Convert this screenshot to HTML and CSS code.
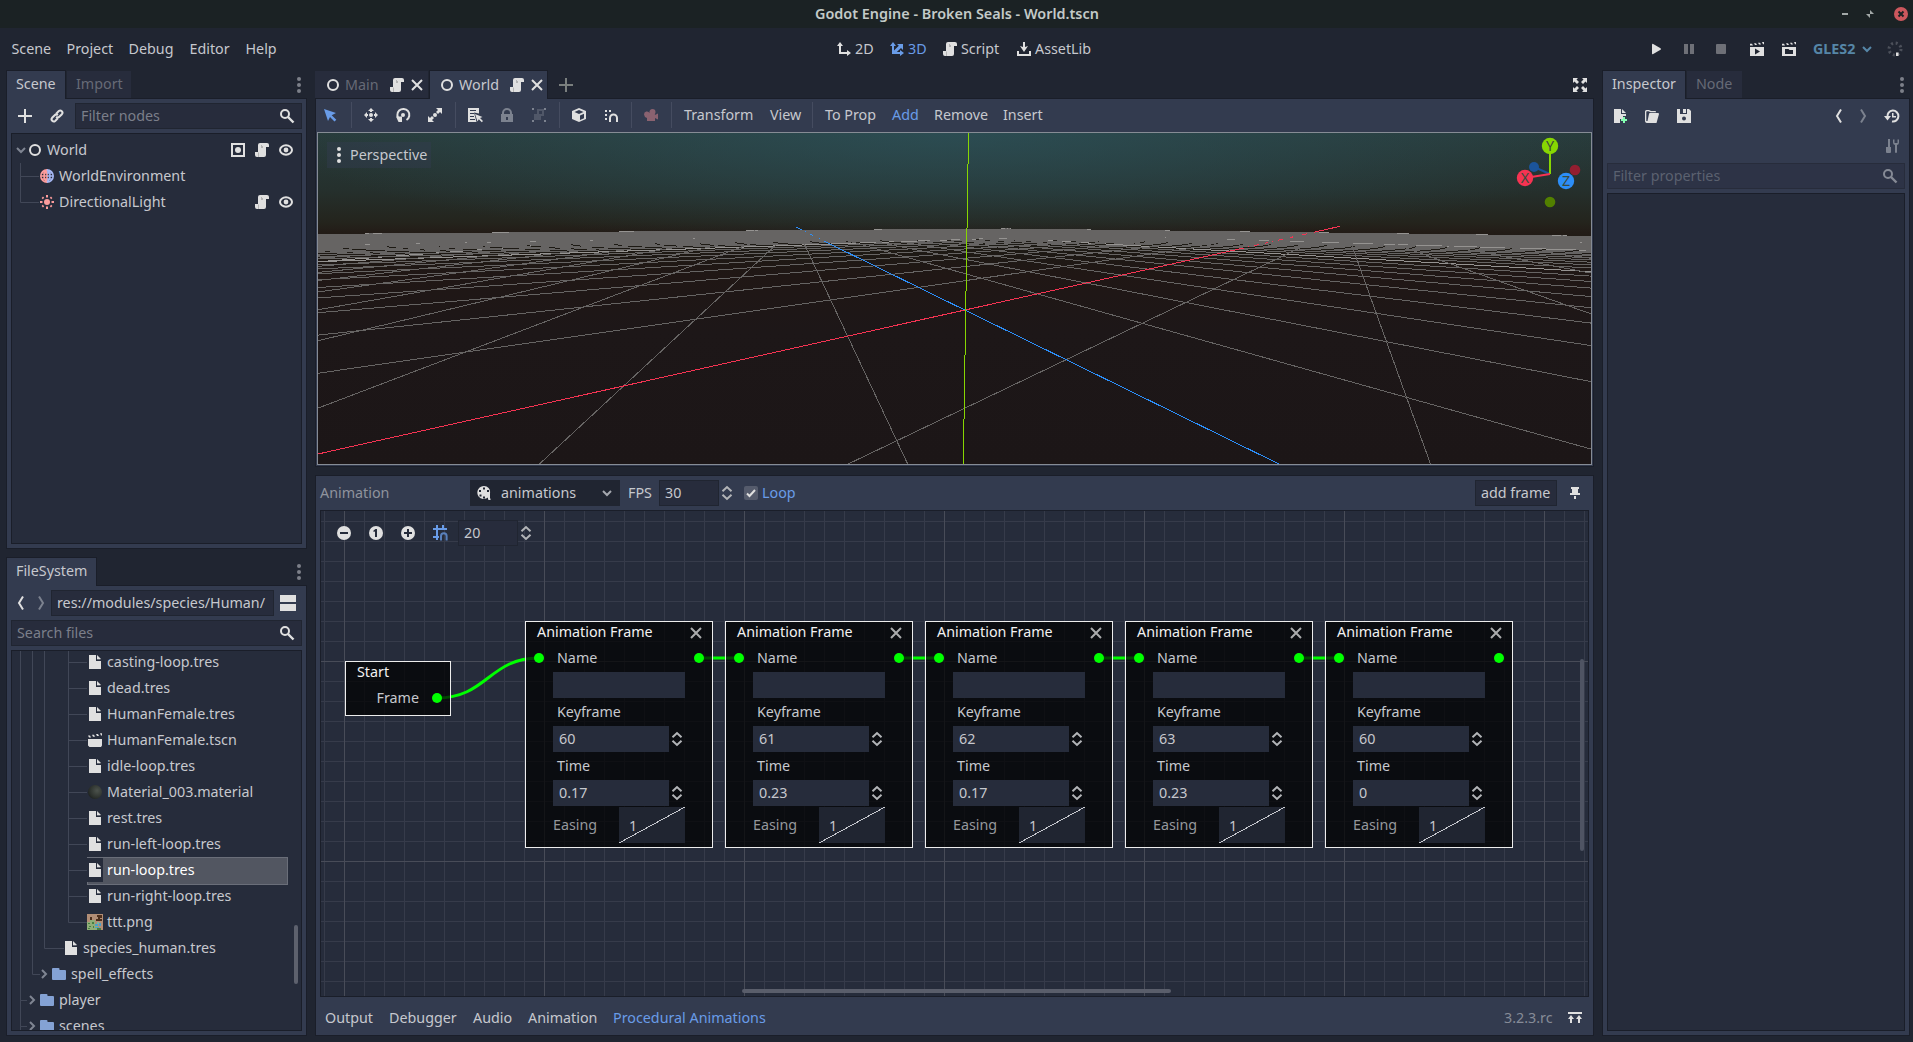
FILE: index.html
```html
<!DOCTYPE html>
<html lang="en">
<head>
<meta charset="utf-8">
<title>Godot Engine - Broken Seals - World.tscn</title>
<link rel="stylesheet" href="styles.css">
</head>
<body>
<svg class="sprite" width="0" height="0">
  <symbol id="script" viewBox="0 0 16 16"><path d="M6 1a2 2 0 0 0-2 2v7H1v3a2 2 0 0 0 2 2h7a2 2 0 0 0 2-2V5h3V3a2 2 0 0 0-2-2z"/><path d="M9 5V4H8V3H7v3h2v-1zM4 10.500h1V15H4z" fill="#b4b4b4"/></symbol>
  <symbol id="ring" viewBox="0 0 16 16"><circle cx="8" cy="8" r="5" fill="none" stroke="currentColor" stroke-width="2"/></symbol>
  <symbol id="close" viewBox="0 0 16 16"><path d="M3 3l10 10M13 3L3 13" fill="none" stroke="currentColor" stroke-width="2"/></symbol>
  <symbol id="plus" viewBox="0 0 16 16"><path d="M7 1h2v6h6v2H9v6H7V9H1V7h6z"/></symbol>
  <symbol id="dots" viewBox="0 0 16 16"><circle cx="8" cy="2" r="2"/><circle cx="8" cy="8" r="2"/><circle cx="8" cy="14" r="2"/></symbol>
  <symbol id="search" viewBox="0 0 16 16"><circle cx="6" cy="6" r="4" fill="none" stroke="currentColor" stroke-width="2"/><path d="M9 9l5.500 5.500" stroke="currentColor" stroke-width="2.400"/></symbol>
  <symbol id="link" viewBox="0 0 16 16"><g fill="none" stroke="currentColor" stroke-width="2"><path d="M7.200 5.700l2.600-2.600a2.200 2.200 0 0 1 3.100 3.100l-2.600 2.600a2.200 2.200 0 0 1-3.100 0"/><path d="M8.800 10.300l-2.600 2.600a2.200 2.200 0 0 1-3.100-3.100l2.600-2.600a2.200 2.200 0 0 1 3.100 0"/></g></symbol>
  <symbol id="down" viewBox="0 0 16 16"><path d="M4 6l4 4 4-4" fill="none" stroke="currentColor" stroke-width="2"/></symbol>
  <symbol id="right" viewBox="0 0 16 16"><path d="M6 4l4 4-4 4" fill="none" stroke="currentColor" stroke-width="2"/></symbol>
  <symbol id="back" viewBox="0 0 16 16"><path d="M10 1.500L6 8l4 6.500" fill="none" stroke="currentColor" stroke-width="2"/></symbol>
  <symbol id="fwd" viewBox="0 0 16 16"><path d="M6 1.500L10 8l-4 6.500" fill="none" stroke="currentColor" stroke-width="2"/></symbol>
  <symbol id="eye" viewBox="0 0 16 16"><ellipse cx="8" cy="8" rx="6" ry="4.700" fill="none" stroke="currentColor" stroke-width="2"/><circle cx="8" cy="8" r="2.400"/></symbol>
  <symbol id="open" viewBox="0 0 16 16"><path d="M1 1h14v14H1zM3 3v10h10V3z" fill-rule="evenodd"/><circle cx="8" cy="8" r="3"/></symbol>
  <symbol id="globe" viewBox="0 0 16 16"><g fill="none" stroke-width="1.600"><g stroke="#fc9c9c"><path d="M8 1.800a6.200 6.200 0 0 0 0 12.400M8 2c-4 3-4 9 0 12M8 1v14M2 8h6M2.500 5h5.500M2.500 11h5.500"/></g><g stroke="#a5b7f3"><path d="M8 1.800a6.200 6.200 0 0 1 0 12.400M8 2c4 3 4 9 0 12M8 8h6M8 5h5.500M8 11h5.500"/></g></g></symbol>
  <symbol id="sun" viewBox="0 0 16 16"><circle cx="8" cy="8" r="3"/><path d="M7 1h2v2.500H7zM7 12.500h2V15H7zM1 7h2.500v2H1zM12.500 7H15v2h-2.500zM2.600 4L4 2.600 5.200 3.800 3.800 5.200zM12 2.600L13.400 4l-1.200 1.200-1.400-1.400zM4 13.400L2.600 12l1.200-1.200 1.400 1.400zM13.400 12L12 13.400l-1.200-1.200 1.400-1.400z"/></symbol>
  <symbol id="file" viewBox="0 0 16 16"><path d="M2 1v14h12V7H9V1zM10 1v4h4z"/><path d="M10 2v4h4z" opacity=".35"/></symbol>
  <symbol id="clap" viewBox="0 0 16 16"><path d="M1 7h14v6.500L14 15H2.500L1 13.500zM1 3.500h2L4 5.500H2zM5 2.800h2L8 4.800H6zM9 2h2l1 2h-2zM13 1.200h2V3.500h-1z"/></symbol>
  <symbol id="clapplay" viewBox="0 0 16 16"><path d="M1 6h14v9H1zM6 7.500v6l5-3z" fill-rule="evenodd"/><path d="M1 2.800h2l1 1.700H1zM5 2.300h2l1 1.700H6zM9 1.800h2l1 1.700h-2zM13 1h2v2.300h-1z"/></symbol>
  <symbol id="clapopen" viewBox="0 0 16 16"><path d="M1 6h14v9H1zM4 8v5h8V9H8.500L7.500 8z" fill-rule="evenodd"/><path d="M1 2.800h2l1 1.700H1zM5 2.300h2l1 1.700H6zM9 1.800h2l1 1.700h-2zM13 1h2v2.300h-1z"/></symbol>
  <symbol id="folder" viewBox="0 0 16 16"><path d="M2 2h5.500a1 1 0 0 1 1 1v1H14a1 1 0 0 1 1 1v8a1 1 0 0 1-1 1H2a1 1 0 0 1-1-1V3a1 1 0 0 1 1-1z"/></symbol>
  <symbol id="split" viewBox="0 0 16 16"><path d="M0 0h16v7H0zM0 9h16v7H0z"/></symbol>
  <symbol id="d2" viewBox="0 0 16 16"><path d="M4 1l3 4H5v6h6V9l4 3-4 3v-2H3V5H1z"/></symbol>
  <symbol id="d3" viewBox="0 0 16 16"><path d="M4 1l3 4H5v4.600l4.800-4.800L8 3h6v6l-2-2-4.200 4H11V9l4 3-4 3v-2H3V5H1z"/></symbol>
  <symbol id="asset" viewBox="0 0 16 16"><path d="M7 1h2v5l3-1-4 6-4-6 3 1zM1 10h2v3h10v-3h2v5H1z"/></symbol>
  <symbol id="spin" viewBox="0 0 16 16"><path d="M3.500 6.200L8 2l4.500 4.200M3.500 9.800L8 14l4.500-4.200" fill="none" stroke="currentColor" stroke-width="2"/></symbol>
  <symbol id="cursor" viewBox="0 0 16 16"><path d="M1 2l4 12 2-4 4.500 4.500 1.800-1.800L8.700 8.200 13 6z"/></symbol>
  <symbol id="move" viewBox="0 0 16 16"><circle cx="8" cy="8" r="2"/><path d="M8 1l3 3H5zM8 15l3-3H5zM1 8l3-3v6zM15 8l-3-3v6zM7 4h2v1H7zM7 11h2v1H7zM4 7h1v2H4zM11 7h1v2h-1z"/></symbol>
  <symbol id="rotate" viewBox="0 0 16 16"><circle cx="8" cy="8" r="2"/><path d="M4.500 12.500A6 6 0 1 1 11.500 13" fill="none" stroke="currentColor" stroke-width="2"/><path d="M1 9.500h6V15H3.500z"/></symbol>
  <symbol id="scale" viewBox="0 0 16 16"><circle cx="8" cy="8" r="2"/><path d="M9 1h6v6l-2-2-2 2-2-2 2-2zM7 15H1V9l2 2 2-2 2 2-2 2z"/></symbol>
  <symbol id="list" viewBox="0 0 16 16"><path d="M1 1h11v5.500L7 5.500l2.500 9.500H1zM3 3v1h6V3zM3 6v1h4V6zM3 9v1h4V9zM3 12v1h5v-1z" fill-rule="evenodd"/><path d="M8 7l7.500 3-2.500 1 3 3-1.200 1.200-3-3-1.300 2.300z"/></symbol>
  <symbol id="lock" viewBox="0 0 16 16"><path d="M8 1a5 5 0 0 0-5 5v1H2v8h12V7h-1V6a5 5 0 0 0-5-5zm0 2a3 3 0 0 1 3 3v1H5V6a3 3 0 0 1 3-3zM7 10h2v3H7z" fill-rule="evenodd"/></symbol>
  <symbol id="group" viewBox="0 0 16 16"><path d="M1 1h2v2H1zM13 1h2v2h-2zM1 13h2v2H1zM13 13h2v2h-2z"/><path d="M6 2h7v7H10v4H3V7h3zM8 4v3h3V4z" fill-rule="evenodd" opacity=".4"/></symbol>
  <symbol id="cube" viewBox="0 0 16 16"><path d="M8 1l7 3v8l-7 3-7-3V4zM3.500 5L8 7l4.500-2L8 3zM9 8.500v4.500l4-1.800V6.700z" fill-rule="evenodd"/></symbol>
  <symbol id="snap" viewBox="0 0 16 16"><path d="M2 3h2v2H2zM6 3h2v2H6zM2 7h2v2H2zM2 11h2v2H2z"/><path d="M7 15v-4a3.500 3.500 0 0 1 7 0v4" fill="none" stroke="currentColor" stroke-width="2"/></symbol>
  <symbol id="camera" viewBox="0 0 16 16"><path d="M9.500 2a3 3 0 0 1 3 3 3 3 0 0 1-.6 2v1L15 6.500v6L12 11v3H4v-3a4 4 0 0 1-3-3.500 3 3 0 0 1 5.600-1.500A3 3 0 0 1 9.500 2z"/></symbol>
  <symbol id="expand" viewBox="0 0 16 16"><path d="M1 1h5L4.500 2.500l2.500 2.500-2 2-2.500-2.500L1 6zM15 1h-5l1.500 1.500L9 5l2 2 2.500-2.500L15 6zM1 15h5l-1.500-1.500L7 11 5 9l-2.500 2.500L1 10zM15 15h-5l1.500-1.500L9 11l2-2 2.500 2.500L15 10z"/></symbol>
  <symbol id="play" viewBox="0 0 16 16"><path d="M3 3.500v9a.8.8 0 0 0 1.200.6l7.300-4.300a1 1 0 0 0 0-1.600L4.200 2.900A.8.8 0 0 0 3 3.500z"/></symbol>
  <symbol id="pause" viewBox="0 0 16 16"><path d="M3 3h4v10H3zM9 3h4v10H9z"/></symbol>
  <symbol id="stop" viewBox="0 0 16 16"><rect x="3" y="3" width="10" height="10" rx="1"/></symbol>
  <symbol id="newfile" viewBox="0 0 16 16"><path d="M2 1v14h6v-4h3V8h3V6H9V1zM10 1v4h4z"/><path d="M11 9h2v2h2v2h-2v2h-2v-2H9v-2h2z" fill="#84ffb1"/></symbol>
  <symbol id="load" viewBox="0 0 16 16"><path d="M2.500 2A1.500 1.500 0 0 0 1 3.500v9C1 14 1.500 15 3 15h9.500l2.500-9a1 1 0 0 0-1-1H6a1 1 0 0 0-1 1l-1.500 7H2.300V4c0-.6.200-.8.700-.8h1.500l2 1H12A1 1 0 0 0 11 3H7L5 2z"/></symbol>
  <symbol id="save" viewBox="0 0 16 16"><path d="M1 1h3v5h7V1h2l2 2v12H1zM8 8.500a2 2 0 1 0 0 4 2 2 0 0 0 0-4zM7 1h3v4H7z" fill-rule="evenodd"/></symbol>
  <symbol id="history" viewBox="0 0 16 16"><path d="M3.500 9A5.500 5.500 0 1 1 8 13.500" fill="none" stroke="currentColor" stroke-width="2"/><path d="M0 8h7l-3.500 4.500zM8 5h1.500v3H12v1.500H8z"/></symbol>
  <symbol id="tools" viewBox="0 0 16 16"><path d="M4 1h2v8h1v5a1 1 0 0 1-1 1H3a1 1 0 0 1-1-1V9h2zM9 1.500v3A2.500 2.500 0 0 0 11 7v7a1 1 0 0 0 2 0V7a2.500 2.500 0 0 0 2-2.500v-3h-1.500V5h-3V1.500z"/></symbol>
  <symbol id="anim" viewBox="0 0 16 16"><path d="M8 1a6.500 6.500 0 1 0 4 11.500V14a1 1 0 0 0 1 1h1.500v-1.500H14V8a6 6 0 0 0-6-7zM7 2.500h2v2H7zM3 5h2v2H3zM11 5h2v2h-2zM3.500 9.500h2v2h-2zM7 11.500h2v2H7z" fill-rule="evenodd"/></symbol>
  <symbol id="zminus" viewBox="0 0 16 16"><circle cx="8" cy="8" r="7"/><path d="M4 7h8v2H4z" fill="#252b3a"/></symbol>
  <symbol id="zone" viewBox="0 0 16 16"><circle cx="8" cy="8" r="7"/><path d="M7.500 4H9v8H7V6.500L5.500 7V5.500z" fill="#252b3a"/></symbol>
  <symbol id="zplus" viewBox="0 0 16 16"><circle cx="8" cy="8" r="7"/><path d="M7 4h2v3h3v2H9v3H7V9H4V7h3z" fill="#252b3a"/></symbol>
  <symbol id="gridsnap" viewBox="0 0 16 16"><path d="M4 0h2v3h4V0h2v3h3v2H6v6h1v2H6v2H4v-2H1v-2h3V5H1V3h3z"/><path d="M9 15.500V11a2.800 2.800 0 0 1 5.600 0v4.500" fill="none" stroke="currentColor" stroke-width="2" opacity=".75"/></symbol>
  <symbol id="pin" viewBox="0 0 16 16"><path d="M4 2h8v2h-1v4h2v2H3V8h2V4H4zM7 11h2v3H7z"/></symbol>
  <symbol id="raise" viewBox="0 0 16 16"><path d="M1 2h14v2H1zM4 5l3 4H5v4H3V9H1zM12 5l3 4h-2v4h-2V9H9z"/></symbol>
</svg>

<header class="titlebar">
  <div class="window-title">Godot Engine - Broken Seals - World.tscn</div>
  <svg class="window-buttons" width="90" height="28"><path d="M22 13h6v2h-6z" fill="#a3a9a8"/><path d="M50 10l4 4h-4zM46 14h4v4z" fill="#a3a9a8"/><circle cx="81" cy="14" r="7" fill="#cc575d"/><path d="M78.500 11.500l5 5M83.500 11.500l-5 5" stroke="#1b2224" stroke-width="2"/></svg>
</header>

<nav class="menubar">
  <div class="menus"><span class="w55">Scene</span><span class="w62">Project</span><span class="w61">Debug</span><span class="w56">Editor</span><span>Help</span></div>
  <div class="modes">
    <span class="w53"><svg class="i"><use href="#d2"/></svg>2D</span><span class="w53 accent"><svg class="i"><use href="#d3"/></svg>3D</span><span class="w74"><svg class="i"><use href="#script"/></svg>Script</span><span><svg class="i"><use href="#asset"/></svg>AssetLib</span>
  </div>
  <div class="runbar">
    <svg class="i"><use href="#play"/></svg><svg class="i dim"><use href="#pause"/></svg><svg class="i dim"><use href="#stop"/></svg><svg class="i run-scene"><use href="#clapplay"/></svg><svg class="i"><use href="#clapopen"/></svg>
    <b class="renderer">GLES2</b><svg class="i renderer-arrow"><use href="#down"/></svg>
    <svg class="i spinner" viewBox="0 0 16 16"><circle cx="8" cy="8" r="6" fill="none" stroke="#4c505a" stroke-width="3" stroke-dasharray="2 2.710"/><path d="M9 11.500h2.500V15H9z" fill="#e0e0e0"/></svg>
  </div>
</nav>

<main class="workspace">
  <aside class="left">
    <section class="dock scene-dock">
      <div class="tabs"><span class="tab on scene-tab">Scene</span><span class="tab import-tab">Import</span><svg class="i dots"><use href="#dots"/></svg></div>
      <div class="panel">
        <div class="row filter-row"><svg class="i"><use href="#plus"/></svg><svg class="i"><use href="#link"/></svg><div class="field grow"><span class="hint">Filter nodes</span><svg class="i"><use href="#search"/></svg></div></div>
        <div class="tree scene-tree">
          <svg class="lines" width="60" height="120"><path d="M8.500 29v39.500H27M8.500 42.500H27"/></svg>
          <div class="item lv0"><svg class="i arrow"><use href="#down"/></svg><svg class="i"><use href="#ring"/></svg><span>World</span><div class="badges"><svg class="i"><use href="#open"/></svg><svg class="i"><use href="#script"/></svg><svg class="i"><use href="#eye"/></svg></div></div>
          <div class="item lv1"><svg class="i"><use href="#globe"/></svg><span>WorldEnvironment</span></div>
          <div class="item lv1"><svg class="i red"><use href="#sun"/></svg><span>DirectionalLight</span><div class="badges"><svg class="i"><use href="#script"/></svg><svg class="i"><use href="#eye"/></svg></div></div>
        </div>
      </div>
    </section>
    <section class="dock file-dock">
      <div class="tabs"><span class="tab on file-tab">FileSystem</span><svg class="i dots"><use href="#dots"/></svg></div>
      <div class="panel">
        <div class="row path-row"><svg class="i"><use href="#back"/></svg><svg class="i faint"><use href="#fwd"/></svg><div class="field path">res://modules/species/Human/</div><svg class="i"><use href="#split"/></svg></div>
        <div class="field search-row"><span class="hint">Search files</span><svg class="i"><use href="#search"/></svg></div>
        <div class="tree file-tree">
          <svg class="lines" width="90" height="381"><path d="M8.500 0v381M20.500 0v323.500H28M32.500 0v297.500H52M56.500 0v271.500H75M56.500 11.500H75M56.500 37.500H75M56.500 63.500H75M56.500 89.500H75M56.500 115.500H75M56.500 141.500H75M56.500 167.500H75M56.500 193.500H75M56.500 219.500H75M56.500 245.500H75M8.500 349.500H15M8.500 375.500H15"/></svg>
          <div class="item lv4"><svg class="i"><use href="#file"/></svg><span>casting-loop.tres</span></div>
          <div class="item lv4"><svg class="i"><use href="#file"/></svg><span>dead.tres</span></div>
          <div class="item lv4"><svg class="i"><use href="#file"/></svg><span>HumanFemale.tres</span></div>
          <div class="item lv4"><svg class="i"><use href="#clap"/></svg><span>HumanFemale.tscn</span></div>
          <div class="item lv4"><svg class="i"><use href="#file"/></svg><span>idle-loop.tres</span></div>
          <div class="item lv4"><i class="i ball"></i><span>Material_003.material</span></div>
          <div class="item lv4"><svg class="i"><use href="#file"/></svg><span>rest.tres</span></div>
          <div class="item lv4"><svg class="i"><use href="#file"/></svg><span>run-left-loop.tres</span></div>
          <div class="item lv4 selected"><svg class="i"><use href="#file"/></svg><span>run-loop.tres</span></div>
          <div class="item lv4"><svg class="i"><use href="#file"/></svg><span>run-right-loop.tres</span></div>
          <div class="item lv4"><svg class="i" viewBox="0 0 16 16" shape-rendering="crispEdges"><path fill="#b28e76" d="M0 0h16v16H0z"/><path fill="#8fae78" d="M0 8h3V6h5v4h3v6H0z"/><path fill="#4d2f1c" d="M3 3h2v3H3zM10 1h5v3h-2v3H9V5h2zM12 5h3v2h-3z"/><path fill="#477f43" d="M1 9h2v1H1zM5 8h2v2H5zM2 12h2v1H2zM1 14h2v1H1zM6 12h1v2H6zM10 14h4v2h-4z"/><path fill="#4a9fc9" d="M8 10h3v2H8zM12 9h2v3h-2zM8 13h4v1H8z"/><path fill="#78b8a0" d="M10 8h2v2h-2z"/></svg><span>ttt.png</span></div>
          <div class="item lv2"><svg class="i"><use href="#file"/></svg><span>species_human.tres</span></div>
          <div class="item lv1f"><svg class="i arrow"><use href="#right"/></svg><svg class="i blue"><use href="#folder"/></svg><span>spell_effects</span></div>
          <div class="item lv0f"><svg class="i arrow"><use href="#right"/></svg><svg class="i blue"><use href="#folder"/></svg><span>player</span></div>
          <div class="item lv0f"><svg class="i arrow"><use href="#right"/></svg><svg class="i blue"><use href="#folder"/></svg><span>scenes</span></div>
          <i class="scroll file-scroll"></i>
        </div>
      </div>
    </section>
  </aside>

  <section class="center">
    <div class="tabs main-tabs">
      <span class="tab doc"><svg class="i"><use href="#ring"/></svg><em>Main</em><svg class="i s"><use href="#script"/></svg><svg class="i"><use href="#close"/></svg></span><span class="tab on doc doc2"><svg class="i"><use href="#ring"/></svg><em>World</em><svg class="i s"><use href="#script"/></svg><svg class="i"><use href="#close"/></svg></span><svg class="i add-tab"><use href="#plus"/></svg><svg class="i expand"><use href="#expand"/></svg>
    </div>
    <div class="panel view-panel">
      <div class="toolbar">
        <svg class="i accent"><use href="#cursor"/></svg><hr><svg class="i"><use href="#move"/></svg><svg class="i"><use href="#rotate"/></svg><svg class="i"><use href="#scale"/></svg><hr><svg class="i"><use href="#list"/></svg><svg class="i faint"><use href="#lock"/></svg><svg class="i faint"><use href="#group"/></svg><hr><svg class="i"><use href="#cube"/></svg><svg class="i"><use href="#snap"/></svg><hr><svg class="i cam"><use href="#camera"/></svg><hr>
        <span class="w86 first">Transform</span><span class="w42">View</span><hr><span class="w67 first">To Prop</span><span class="w42 accent">Add</span><span class="w69">Remove</span><span>Insert</span>
      </div>
      <div class="viewport">
        <svg id="scene" width="1273" height="331" viewBox="318 133 1273 331">
          <g id="floor"></g>
          <g class="axes">
            <path d="M318 454L965 310" stroke="#f63352"/><path d="M965 310L1241 248.600" stroke="#f63352"/><path d="M1241 248.600L1317 231.500" stroke="#f63352" stroke-dasharray="3 4 1 5 5 7"/><path d="M1317 231.500L1340 226.300" stroke="#f63352"/>
            <path d="M1279 464L827 242.500" stroke="#2c8ef8"/><path d="M827 242.500L801 229.700" stroke="#2c8ef8" stroke-dasharray="3 5 1 7"/><path d="M802 230L796 227" stroke="#2c8ef8"/>
            <path d="M968.500 133L963.300 464" stroke="#87d602"/>
          </g>
          <g class="gizmo">
            <path d="M1550 174L1534 167" stroke="#1b549a"/><path d="M1550 174V146" stroke="#87d602"/><path d="M1550 174L1525 178" stroke="#f63352"/>
            <circle cx="1534" cy="167" r="5" fill="#1b549a"/><circle cx="1575" cy="170" r="5.300" fill="#931e30"/><circle cx="1550" cy="202" r="5.300" fill="#528000"/>
            <circle cx="1550" cy="146" r="8.200" fill="#87d602"/><circle cx="1525" cy="178" r="8.200" fill="#f63352"/><circle cx="1566" cy="181" r="8.200" fill="#2c8ef8"/>
            <text x="1550" y="151">Y</text><text x="1525" y="183">X</text><text x="1566" y="186">Z</text>
          </g>
        </svg>
        <div class="view-label"><svg class="i"><use href="#dots"/></svg>Perspective</div>
      </div>
    </div>

    <div class="panel bottom-panel">
      <div class="anim-bar">
        <span class="muted anim-label">Animation</span>
        <div class="dropdown"><svg class="i"><use href="#anim"/></svg><span>animations</span><svg class="i"><use href="#down"/></svg></div>
        <span class="fps">FPS</span><div class="field num">30</div><svg class="i"><use href="#spin"/></svg>
        <svg class="check" viewBox="0 0 14 14"><rect width="14" height="14" rx="2" fill="#555b6c"/><path d="M3 7.500l2.500 2.500L11 4" fill="none" stroke="#e0e0e0" stroke-width="2"/></svg><span class="accent">Loop</span>
        <div class="field add-frame">add frame</div><svg class="i pin"><use href="#pin"/></svg>
      </div>
      <div class="graph">
        <div class="graph-tools"><svg class="i"><use href="#zminus"/></svg><svg class="i"><use href="#zone"/></svg><svg class="i"><use href="#zplus"/></svg><svg class="i accent"><use href="#gridsnap"/></svg><div class="field num">20</div><svg class="i"><use href="#spin"/></svg></div>
        <svg class="wires" width="1267" height="485" viewBox="321 511 1267 485"><path d="M437 698C487 698 489 658 539 658M699 658h40M899 658h40M1099 658h40M1299 658h40"/></svg>
        <div class="node start"><span class="title">Start</span><span class="slot">Frame</span><i class="port out"></i></div>
        <div class="node frame f1"><div class="head"><span class="title">Animation Frame</span><svg class="i"><use href="#close"/></svg></div><i class="port in"></i><i class="port out"></i><label class="first-label">Name</label><div class="box"></div><label>Keyframe</label><div class="spinrow"><div class="box">60</div><svg class="i"><use href="#spin"/></svg></div><label>Time</label><div class="spinrow"><div class="box">0.17</div><svg class="i"><use href="#spin"/></svg></div><div class="easing"><span>Easing</span><div class="curve">1<svg viewBox="0 0 66 36"><path d="M0 36L66 0"/></svg></div></div></div>
        <div class="node frame f2"><div class="head"><span class="title">Animation Frame</span><svg class="i"><use href="#close"/></svg></div><i class="port in"></i><i class="port out"></i><label class="first-label">Name</label><div class="box"></div><label>Keyframe</label><div class="spinrow"><div class="box">61</div><svg class="i"><use href="#spin"/></svg></div><label>Time</label><div class="spinrow"><div class="box">0.23</div><svg class="i"><use href="#spin"/></svg></div><div class="easing"><span>Easing</span><div class="curve">1<svg viewBox="0 0 66 36"><path d="M0 36L66 0"/></svg></div></div></div>
        <div class="node frame f3"><div class="head"><span class="title">Animation Frame</span><svg class="i"><use href="#close"/></svg></div><i class="port in"></i><i class="port out"></i><label class="first-label">Name</label><div class="box"></div><label>Keyframe</label><div class="spinrow"><div class="box">62</div><svg class="i"><use href="#spin"/></svg></div><label>Time</label><div class="spinrow"><div class="box">0.17</div><svg class="i"><use href="#spin"/></svg></div><div class="easing"><span>Easing</span><div class="curve">1<svg viewBox="0 0 66 36"><path d="M0 36L66 0"/></svg></div></div></div>
        <div class="node frame f4"><div class="head"><span class="title">Animation Frame</span><svg class="i"><use href="#close"/></svg></div><i class="port in"></i><i class="port out"></i><label class="first-label">Name</label><div class="box"></div><label>Keyframe</label><div class="spinrow"><div class="box">63</div><svg class="i"><use href="#spin"/></svg></div><label>Time</label><div class="spinrow"><div class="box">0.23</div><svg class="i"><use href="#spin"/></svg></div><div class="easing"><span>Easing</span><div class="curve">1<svg viewBox="0 0 66 36"><path d="M0 36L66 0"/></svg></div></div></div>
        <div class="node frame f5"><div class="head"><span class="title">Animation Frame</span><svg class="i"><use href="#close"/></svg></div><i class="port in"></i><i class="port out"></i><label class="first-label">Name</label><div class="box"></div><label>Keyframe</label><div class="spinrow"><div class="box">60</div><svg class="i"><use href="#spin"/></svg></div><label>Time</label><div class="spinrow"><div class="box">0</div><svg class="i"><use href="#spin"/></svg></div><div class="easing"><span>Easing</span><div class="curve">1<svg viewBox="0 0 66 36"><path d="M0 36L66 0"/></svg></div></div></div>
        <i class="scroll vscroll"></i><i class="scroll hscroll"></i>
      </div>
      <div class="bottom-tabs"><span class="w64">Output</span><span class="w84">Debugger</span><span class="w55">Audio</span><span class="w85">Animation</span><span class="accent">Procedural Animations</span><span class="version">3.2.3.rc</span><svg class="i"><use href="#raise"/></svg></div>
    </div>
  </section>

  <aside class="dock inspector">
    <div class="tabs"><span class="tab on insp-tab">Inspector</span><span class="tab node-tab">Node</span><svg class="i dots"><use href="#dots"/></svg></div>
    <div class="panel">
      <div class="insp-tools"><svg class="i"><use href="#newfile"/></svg><svg class="i"><use href="#load"/></svg><svg class="i"><use href="#save"/></svg><svg class="i prev"><use href="#back"/></svg><svg class="i faint"><use href="#fwd"/></svg><svg class="i hist"><use href="#history"/></svg></div>
      <div class="insp-sub"><svg class="i faint"><use href="#tools"/></svg></div>
      <div class="field disabled"><span class="hint">Filter properties</span><svg class="i"><use href="#search"/></svg></div>
      <div class="tree grow"></div>
    </div>
  </aside>
</main>
<script src="floor.js"></script>
</body>
</html>
```
FILE: styles.css
```css
* { box-sizing: border-box; }
html, body { margin: 0; width: 1913px; height: 1042px; overflow: hidden; }
body {
  display: flex; flex-direction: column;
  background: #202531; color: #c6c8ce;
  font: 14.300px/26px "Noto Sans", "Open Sans", sans-serif;
  white-space: nowrap;
}
.sprite { position: absolute; }
.i { width: 16px; height: 16px; flex: none; display: block; fill: currentColor; color: #e0e0e0; }
.dim { color: #6e7077; }
.faint { color: #7c828f; }
.accent, .i.accent, .accent .i { color: #699ce8; }
.red { color: #fc9c9c; }
.blue { color: #84a2d4; }
.grow { flex: 1; }
.w42 { width: 42px; } .w53 { width: 53px; } .w55 { width: 55px; }
.w56 { width: 56px; } .w61 { width: 61px; } .w62 { width: 62px; } .w64 { width: 64px; }
.w67 { width: 67px; } .w69 { width: 69px; } .w74 { width: 74px; } .w84 { width: 84px; }
.w85 { width: 85px; } .w86 { width: 86px; }

.titlebar { height: 28px; flex: none; background: #1b2224; display: grid; grid-template-columns: 1fr 283px 1fr; align-items: center; }
.window-title { grid-column: 2; font-weight: 600; font-size: 14.400px; color: #c3cac8; text-align: center; }
.window-buttons { justify-self: end; margin-right: 3px; }

.menubar { height: 42px; flex: none; display: grid; grid-template-columns: 836px 813px 1fr; align-items: center; }
.menus { display: flex; padding-left: 11.500px; }
.modes { display: flex; }
.modes span { display: flex; align-items: center; gap: 3px; }
.runbar { display: flex; align-items: center; gap: 16px; }
.runbar .run-scene { margin-left: 4px; }
.renderer { color: #5686a7; margin-left: 0; width: 42px; }
.renderer-arrow { color: #5686a7; margin-left: -12px; }
.runbar .spinner { margin-left: -4px; }

.workspace { flex: 1; min-height: 0; display: flex; padding: 0 3px 6px 6px; }
.left { width: 301px; min-height: 0; display: flex; flex-direction: column; gap: 8px; }
.dock { display: flex; flex-direction: column; min-height: 0; }
.scene-dock { height: 479px; flex: none; }
.file-dock { flex: 1; }
.center { width: 1279px; margin-left: 8px; display: flex; flex-direction: column; min-height: 0; }
.inspector { width: 308px; margin-left: 8px; }
.tabs { display: flex; align-items: center; height: 29px; margin-bottom: -1px; position: relative; flex: none; }
.tab { height: 29px; padding: 1px 9px 0; margin-right: 1px; background: #272c3c; color: #666a76; border-top: 1px solid #202531; }
.tab.on { background: #333b4f; color: #c6c8ce; border: 1px solid #1a1e29; border-bottom: 0; padding-top: 0; z-index: 1; }
.tab:not(.on) { height: 28px; align-self: flex-start; padding-top: 0; }
.scene-tab { width: 60px; } .import-tab { width: 64px; }
.file-tab { width: 91px; }
.insp-tab { width: 84px; } .node-tab { width: 55px; }
.tabs .dots { margin-left: auto; color: #7c8089; margin-right: 0; }
.panel { background: #333b4f; border: 1px solid #1a1e29; flex: 1; display: flex; flex-direction: column; padding: 4px; min-height: 0; }
.row { display: flex; align-items: center; }
.field { height: 26px; background: #272c3c; border: 1px solid #202531; padding: 0 6px 0 5px; line-height: 24px; display: flex; align-items: center; justify-content: space-between; }
.hint { color: #7b7f8a; }
.tree { position: relative; background: #262c3b; border: 1px solid #1a1e29; overflow: hidden; }
.filter-row > .i { margin-left: 6px; margin-right: 10px; }
.filter-row > .i + .i { margin-right: 10px; }
.scene-tree { flex: 1; margin-top: 4px; padding-top: 3px; }
.lines { position: absolute; left: 0; top: 0; fill: none; stroke: #414757; }
.item { position: relative; height: 26px; display: flex; align-items: center; line-height: 26px; }
.item span { margin-left: 4px; }
.item .arrow { color: #7f8592; margin-right: -2px; }
.lv0 { padding-left: 1px; } .lv1 { padding-left: 27px; } .lv4 { padding-left: 75px; } .lv2 { padding-left: 51px; }
.lv1f { padding-left: 24px; } .lv0f { padding-left: 12px; }
.lv1f .arrow, .lv0f .arrow { margin-right: -1px; }
.badges { display: flex; gap: 8px; margin-left: auto; padding-right: 7px; }
.path-row > .i { margin-left: 2px; }
.path-row > .i + .i { margin-left: 4px; margin-right: 2px; }
.path-row .path { width: 223px; padding-right: 0; flex: none; }
.path-row > .path + .i { margin: 0 0 0 6px; }
.search-row { margin: 4px 0; flex: none; }
.file-tree { flex: 1; min-height: 0; }
.file-tree .item:first-of-type { margin-top: -2px; }
.ball { border-radius: 50%; background: radial-gradient(circle at 65% 40%, #4c524c, #2b302c 60%, #101110); width: 14px; height: 14px; margin: 0 1px; }
.selected::before { content: ""; position: absolute; left: 75px; top: 0; width: 199px; height: 26px; background: #525661; border: 1px solid #6a6e79; }
.selected .i { position: relative; background: #262c3b; height: 24px; padding: 4px 0; width: 16px; }
.selected span { position: relative; color: #fff; }
.scroll { position: absolute; border-radius: 2px; background: #5d616d; }
.file-scroll { left: 282px; top: 274px; width: 4px; height: 59px; }

.main-tabs .tab { display: flex; align-items: center; padding: 0 0 0 10px; }
.main-tabs em { font-style: normal; width: 44px; margin-left: 4px; }
.doc { width: 113px; margin-right: 0; }
.doc .s { margin-right: 4px; }
.main-tabs .doc2 { width: 119px; padding-left: 9px; margin-left: 1px; }
.doc2 em { width: 50px; }
.add-tab { color: #7a7f7e; margin-left: 10px; }
.expand { margin-left: auto; margin-right: 6px; }
.view-panel { flex: none; height: 369px; padding: 0; }
.toolbar { height: 33px; display: flex; align-items: center; padding-left: 7px; padding-bottom: 1px; }
.toolbar .i { margin-right: 16px; }
.toolbar hr { width: 1px; height: 26px; margin: 0 11px 0 -4px; border: 0; background: #454c60; }
.toolbar span + hr { margin-left: 0; }
.toolbar .first { margin-left: 1px; }
.toolbar .cam { color: #8a6270; }
.viewport { position: relative; height: 333px; margin: 0 1px; border: 1px solid #868c95; background:
  radial-gradient(ellipse 680px 115px at 50% 0, rgba(45,82,90,.75), rgba(45,82,90,0)),
  linear-gradient(#283b3b 0, #25302d 17%, #24241d 27%, #231c17 30%, #1d1a14 34%, #201715 43%, #1d1718 60%, #1c1617); }
#scene { display: block; }
#floor, .axes { fill: none; shape-rendering: crispEdges; }
.gizmo { stroke-width: 2; fill: none; }
.gizmo circle, .gizmo text { stroke: none; }
.gizmo text { font-size: 14.300px; text-anchor: middle; fill: #3b4a3c; }
.view-label { position: absolute; left: 9px; top: 9px; width: 104px; height: 26px; display: flex; align-items: center; gap: 3px; padding-left: 4px; background: rgba(51,59,79,.45); }

.bottom-panel { margin-top: 8px; padding: 4px 4px 0; }
.anim-bar { height: 26px; display: flex; align-items: center; flex: none; }
.muted { color: #8f939d; }
.anim-label { width: 150px; }
.dropdown { width: 150px; height: 26px; background: #202531; display: flex; align-items: center; padding: 0 5px 0 6px; }
.dropdown span { flex: 1; margin-left: 9px; }
.dropdown .i:last-child { color: #a5a8af; }
.fps { width: 31px; margin-left: 8px; }
.num { width: 60px; }
.anim-bar .num + .i, .graph-tools .num + .i, .spinrow .i { color: #b3b5b8; }
.check { width: 14px; height: 14px; margin: 0 4px 0 9px; }
.add-frame { margin-left: auto; width: 82px; }
.pin { margin: 0 6px 0 10px; }
.graph { position: relative; height: 487px; margin-top: 4px; border: 1px solid #1a1e29; overflow: hidden; flex: none;
  background:
   linear-gradient(90deg, #484c58 1px, transparent 1px) 23px 0 / 200px 200px,
   linear-gradient(#484c58 1px, transparent 1px) 0 150px / 200px 200px,
   linear-gradient(90deg, #363b4a 1px, transparent 1px) 3px 0 / 20px 20px,
   linear-gradient(#363b4a 1px, transparent 1px) 0 10px / 20px 20px, #262c3b; }
.graph-tools { position: relative; display: flex; align-items: center; gap: 16px; padding: 9px 0 0 15px; }
.graph-tools .num { margin-left: -6px; } .graph-tools .num + .i { margin-left: -16px; }
.wires { position: absolute; left: 0; top: 0; fill: none; stroke: #0f0; stroke-width: 3; }
.node { position: absolute; border: 1px solid #ededed; background: rgba(0,0,0,.72); }
.title { color: #f2f2f2; }
.start { left: 24px; top: 150px; width: 106px; height: 55px; display: flex; flex-direction: column; padding: 0 31px 0 11px; line-height: 20px; }
.start .slot { margin-top: 6px; text-align: right; }
.port { position: absolute; width: 10px; height: 10px; border-radius: 50%; background: #0f0; }
.start .port { left: 86px; top: 31px; }
.frame { top: 110px; width: 188px; height: 227px; padding: 0 27px; display: flex; flex-direction: column; }
.f1 { left: 204px; } .f2 { left: 404px; } .f3 { left: 604px; } .f4 { left: 804px; } .f5 { left: 1004px; }
.head { height: 20px; line-height: 20px; display: flex; justify-content: space-between; margin: 0 -19px 3px -16px; }
.head .i { color: #aaabac; margin-top: 3px; }
.frame .port { top: 31px; z-index: 1; } .frame .in { left: 8px; } .frame .out { left: 168px; }
.frame label { height: 28px; line-height: 28px; padding-left: 4px; flex: none; }
.frame .first-label { height: 27px; line-height: 26px; }
.box { height: 26px; background: #262c3b; flex: none; padding-left: 6px; }
.spinrow { display: flex; align-items: center; }
.spinrow .box { width: 116px; }
.easing { display: flex; justify-content: space-between; color: #96989c; margin-top: 1px; line-height: 36px; }
.curve { position: relative; width: 66px; height: 36px; background: #202531; padding-left: 10px; color: #c6c8ce; line-height: 37px; }
.curve svg { position: absolute; left: 0; top: 0; width: 66px; height: 36px; stroke: #c6c8ce; shape-rendering: crispEdges; }
.vscroll { right: 4px; top: 148px; width: 4px; height: 192px; background: #4f5463; }
.hscroll { left: 421px; bottom: 3px; width: 429px; height: 4px; background: #5a5e6b; }
.bottom-tabs { flex: 1; display: flex; align-items: center; padding: 4px 6px 0 5px; }
.version { margin-left: auto; width: 63px; color: #868b97; }

.inspector .panel { padding: 0 4px 4px; }
.insp-tools { display: flex; align-items: center; height: 34px; padding: 0 5px 0 5px; gap: 16px; }
.insp-tools .prev { margin-left: auto; margin-right: -8px; }
.insp-tools .hist { margin-left: -3px; }
.insp-sub { height: 30px; display: flex; justify-content: flex-end; align-items: center; padding-right: 5px; padding-bottom: 4px; }
.inspector .field { flex: none; margin-bottom: 4px; }
.disabled { background: #2d3346; border-color: #272c3b; }
.disabled .hint { color: #5b6170; } .disabled .i { color: #858a95; }
```
FILE: floor.js
```js
// Projects the ground grid: unit cell (s, t) on the floor plane to viewport pixels.
const M = 0.2362, K = 0.3735;
const origin = [965, 310], vanishX = [1345, 226.3], vanishZ = [796, 226.3];
const EXTENT = 50, NEAR = 0.05;

const depth = (s, t) => 1 + M * s + K * t;
function project(s, t) {
  const w = depth(s, t);
  return [0, 1].map(i => ((origin[i] + vanishX[i] * M * s + vanishZ[i] * K * t) / w).toFixed(2)).join(' ');
}

// Cuts a floor segment at the near plane and returns its path data.
function segment(a, b) {
  let da = depth(...a), db = depth(...b);
  if (da < NEAR && db < NEAR) return '';
  if (da > db) { [a, b] = [b, a]; [da, db] = [db, da]; }
  if (da < NEAR) {
    const f = (NEAR - da) / (db - da);
    a = [a[0] + (b[0] - a[0]) * f, a[1] + (b[1] - a[1]) * f];
  }
  return 'M' + project(...a) + 'L' + project(...b);
}

const paths = { minor: '', major: '' };
for (let n = -EXTENT; n <= EXTENT; n++) {
  if (n === 0) continue;
  const kind = n % 10 === 0 ? 'major' : 'minor';
  paths[kind] += segment([-EXTENT, n], [EXTENT, n]) + segment([n, -EXTENT], [n, EXTENT]);
}

const floor = document.getElementById('floor');
for (const [kind, color] of [['major', '#959391'], ['minor', '#666463']]) {
  const path = document.createElementNS('http://www.w3.org/2000/svg', 'path');
  path.setAttribute('d', paths[kind]);
  path.setAttribute('stroke', color);
  floor.appendChild(path);
}
```
